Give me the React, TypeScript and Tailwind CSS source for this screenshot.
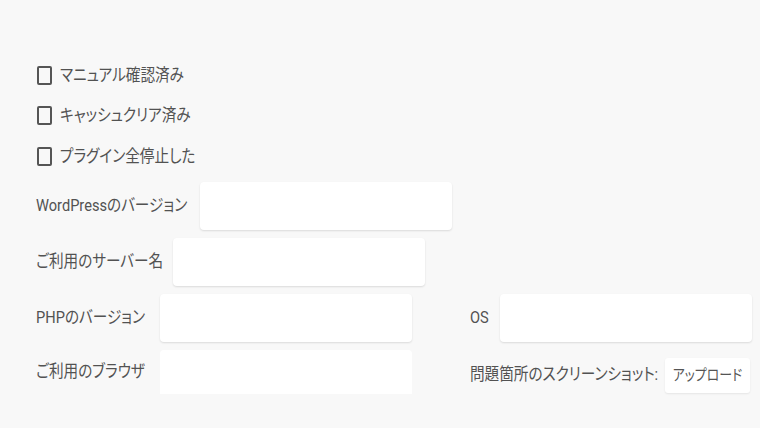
import React from 'react';

const checks = ['マニュアル確認済み', 'キャッシュクリア済み', 'プラグイン全停止した'];

// The reference type is set narrow, so each label is squeezed horizontally
// inside a box of fixed width.
const Label = ({ text, width }: { text: string; width: string }) => (
  <span className={`${width} shrink-0 whitespace-nowrap`}>
    <span className="inline-block origin-left scale-x-[0.86]">{text}</span>
  </span>
);

const Field = ({ className = '' }: { className?: string }) => (
  <div className={`w-[252px] h-12 bg-white rounded-[4px] shadow-[0_1px_2px_rgba(0,0,0,0.12)] shrink-0 ${className}`} />
);

export default function App() {
  return (
    <div className="w-[760px] h-[428px] overflow-hidden bg-[#f8f8f8] pt-[55px] pl-[36px] text-[17px] text-[#525252] font-['Roboto','Noto_Sans_CJK_JP',sans-serif] [font-feature-settings:'palt']">
      <div className="flex flex-col">
        {checks.map(label => (
          <label key={label} className="h-[40.5px] flex items-center">
            <span className="ml-px w-[15px] h-[19px] border-2 border-[#555] rounded-[2px] shrink-0" />
            <span className="ml-[8px] leading-none whitespace-nowrap">
              <span className="inline-block origin-left scale-x-[0.86]">{label}</span>
            </span>
          </label>
        ))}
      </div>

      <div className="mt-[5px] flex flex-col gap-2">
        <div className="flex items-center">
          <Label text="WordPressのバージョン" width="w-[164px]" />
          <Field />
        </div>
        <div className="flex items-center">
          <Label text="ご利用のサーバー名" width="w-[137px]" />
          <Field />
        </div>
        <div className="grid grid-cols-[434px_1fr]">
          <div className="flex items-center">
            <Label text="PHPのバージョン" width="w-[124px]" />
            <Field />
          </div>
          <div className="flex items-center">
            <Label text="OS" width="w-[30px]" />
            <Field />
          </div>
        </div>
        <div className="grid grid-cols-[434px_1fr] items-start">
          <div className="flex items-center">
            <Label text="ご利用のブラウザ" width="w-[124px]" />
            <Field className="h-[44px] shadow-none rounded-b-none" />
          </div>
          <div className="flex items-center h-[50px]">
            <Label text="問題箇所のスクリーンショット:" width="w-[195px]" />
            <button className="relative w-[85px] h-[35px] mt-[8px] self-start bg-white rounded-[3px] shadow-[0_1px_2px_rgba(0,0,0,0.08)] text-[15px] text-[#555] shrink-0 whitespace-nowrap">
              <span className="inline-block scale-x-[0.86]">アップロード</span>
            </button>
          </div>
        </div>
      </div>
    </div>
  );
}
